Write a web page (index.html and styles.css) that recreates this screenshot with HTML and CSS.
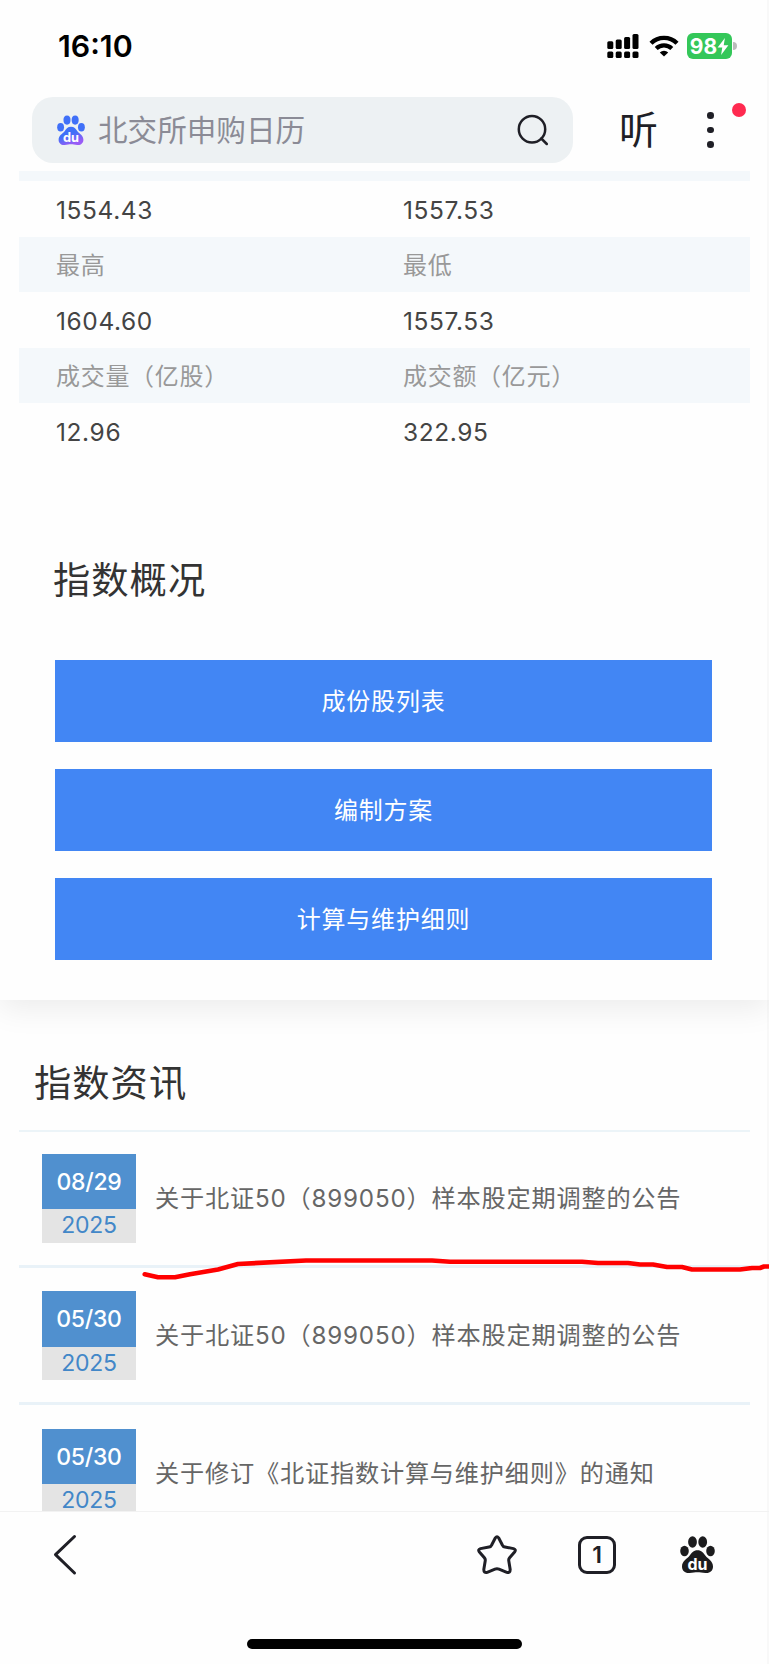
FILE: index.html
```html
<!DOCTYPE html>
<html lang="zh-CN">
<head>
  <meta charset="UTF-8" />
  <title>北证50</title>
  <link rel="stylesheet" href="styles.css">
</head>
<body>
  <!-- Status bar -->
  <div class="status">
    <span class="time">16:10</span>
    <div class="status-icons">
      <svg class="signal" width="33" height="26" viewBox="0 0 33 26">
        <rect x="0.3" y="8.2" width="6" height="7.8" rx="1.5"/>
        <rect x="8.7" y="6.6" width="6" height="9.4" rx="1.5"/>
        <rect x="17.1" y="4" width="6" height="12" rx="1.5"/>
        <rect x="25.5" y="1" width="6" height="15" rx="1.5"/>
        <rect x="0.3" y="18.5" width="6" height="6.5" rx="1.5"/>
        <rect x="8.7" y="18.5" width="6" height="6.5" rx="1.5"/>
        <rect x="17.1" y="18.5" width="6" height="6.5" rx="1.5"/>
        <rect x="25.5" y="18.5" width="6" height="6.5" rx="1.5"/>
      </svg>
      <svg class="wifi" width="30" height="24" viewBox="0 0 30 24">
        <path d="M2 9.2A18.5 18.5 0 0 1 28 9.2" fill="none" stroke="#000" stroke-width="4.4"/>
        <path d="M7.2 14.6A11.2 11.2 0 0 1 22.8 14.6" fill="none" stroke="#000" stroke-width="4.2"/>
        <path d="M15 22.6L10.8 18.4A6 6 0 0 1 19.2 18.4Z"/>
      </svg>
      <div class="battery">
        <span>98</span>
        <svg width="12" height="19" viewBox="0 0 11 18"><path d="M7.3 1L0.4 10H4.8L3.7 17L10.6 7.8H6.2Z" fill="#fff"/></svg>
      </div>
      <i class="nub"></i>
    </div>
  </div>

  <!-- Search -->
  <div class="topbar">
    <div class="search">
      <svg width="28" height="31" viewBox="0 0 35 38">
        <defs>
          <linearGradient id="paw" x1="0" y1="0" x2="0.5" y2="1">
            <stop offset="0.5" stop-color="#4070f8"/>
            <stop offset="1" stop-color="#9a5cf6"/>
          </linearGradient>
        </defs>
        <g fill="#4070f8">
          <ellipse cx="4.5" cy="15" rx="4.3" ry="5.3"/>
          <ellipse cx="12.5" cy="6" rx="4.4" ry="5.7"/>
          <ellipse cx="22.7" cy="6" rx="4.4" ry="5.7"/>
          <ellipse cx="30.5" cy="15" rx="4.3" ry="5.3"/>
        </g>
        <path fill="url(#paw)" d="M17.5 14.3C21.5 14.3 23.5 17 25.5 19.8C28 23 33 25 33 30.5C33 35 29.5 37.5 25.5 37C22 36.6 20 36.2 17.5 36.2C15 36.2 13 36.6 9.5 37C5.5 37.5 2 35 2 30.5C2 25 7 23 9.5 19.8C11.5 17 13.5 14.3 17.5 14.3Z"/>
        <text class="du" x="17.5" y="34">du</text>
      </svg>
      <span class="query">北交所申购日历</span>
      <svg width="32" height="32" viewBox="0 0 32 32" fill="none" stroke="#1f1f26" stroke-width="2.5" stroke-linecap="round">
        <circle cx="15" cy="15.3" r="13.2"/>
        <path d="M24.3 24.5L29.8 30"/>
      </svg>
    </div>
    <span class="listen">听</span>
    <div class="more">
      <i></i><i></i><i></i>
      <b class="badge"></b>
    </div>
  </div>

  <main class="page">
    <section class="overview">
      <div class="quote">
        <div class="row label cut"></div>
        <div class="row"><span>1554.43</span><span>1557.53</span></div>
        <div class="row label"><span>最高</span><span>最低</span></div>
        <div class="row"><span>1604.60</span><span>1557.53</span></div>
        <div class="row label"><span>成交量（亿股）</span><span>成交额（亿元）</span></div>
        <div class="row"><span>12.96</span><span>322.95</span></div>
      </div>
      <h2>指数概况</h2>
      <div class="links">
        <a class="btn">成份股列表</a>
        <a class="btn">编制方案</a>
        <a class="btn">计算与维护细则</a>
      </div>
    </section>

    <section class="news">
      <h2>指数资讯</h2>
      <div class="item">
        <div class="date"><b>08/29</b><span>2025</span></div>
        <p>关于北证50（899050）样本股定期调整的公告</p>
      </div>
      <div class="item">
        <div class="date"><b>05/30</b><span>2025</span></div>
        <p>关于北证50（899050）样本股定期调整的公告</p>
      </div>
      <div class="item">
        <div class="date"><b>05/30</b><span>2025</span></div>
        <p>关于修订《北证指数计算与维护细则》的通知</p>
      </div>
    </section>
  </main>

  <!-- Browser toolbar -->
  <footer>
    <nav class="tools">
      <svg class="back" width="24" height="42" viewBox="0 0 24 42" fill="none" stroke="#1f1f26" stroke-width="3" stroke-linecap="round" stroke-linejoin="round">
        <path d="M21.5 2.5L2.5 20.7L21.5 39"/>
      </svg>
      <svg width="40" height="40" viewBox="0 0 40 40" fill="none" stroke="#1f1f26" stroke-width="3" stroke-linejoin="round">
        <path d="M18.4 2.8Q20 0.6 21.6 2.8L25.2 9.8Q26 11.6 28 12L36.5 13.6Q39.5 14.6 37.6 17L32.6 22.8Q31.4 24.2 31.8 26L33.2 34.5Q33.2 38.2 29.8 37.4L22 34.2Q20 33.4 18 34.2L10.2 37.4Q6.8 38.2 6.8 34.5L8.2 26Q8.6 24.2 7.4 22.8L2.4 17Q0.5 14.6 3.5 13.6L12 12Q14 11.6 14.8 9.8Z"/>
      </svg>
      <span class="tabs">1</span>
      <svg width="35" height="38" viewBox="0 0 35 38" fill="#1c1c1e">
        <ellipse cx="4.5" cy="15" rx="4.3" ry="5.3"/>
        <ellipse cx="12.5" cy="6" rx="4.4" ry="5.7"/>
        <ellipse cx="22.7" cy="6" rx="4.4" ry="5.7"/>
        <ellipse cx="30.5" cy="15" rx="4.3" ry="5.3"/>
        <path d="M17.5 14.3C21.5 14.3 23.5 17 25.5 19.8C28 23 33 25 33 30.5C33 35 29.5 37.5 25.5 37C22 36.6 20 36.2 17.5 36.2C15 36.2 13 36.6 9.5 37C5.5 37.5 2 35 2 30.5C2 25 7 23 9.5 19.8C11.5 17 13.5 14.3 17.5 14.3Z"/>
        <text class="du" x="17.5" y="34">du</text>
      </svg>
    </nav>
    <div class="home"></div>
  </footer>

  <!-- Hand-drawn underline -->
  <svg class="mark" width="629" height="24" viewBox="141 1257 629 24">
    <path d="M144.7 1274.3L158 1277.3H175L190 1274.3L218 1269.5L238 1264L306 1260.5H432L450 1261.7H582L598 1263H628L640 1264.5H653L667 1267H682L692 1269.5H740L752 1268H760L764 1266.5H770"/>
  </svg>
</body>
</html>
```

FILE: styles.css
```css
*{margin:0;padding:0;box-sizing:border-box}
body{
  position:relative;
  display:flex;
  flex-direction:column;
  width:769px;
  height:1664px;
  overflow:hidden;
  background:linear-gradient(to right,#fefefe 767px,#f8f8f8 767px);
  font-family:Inter,'Noto Sans CJK SC',sans-serif;
  color:#333;
}
svg{display:block;flex:none}

.status{display:flex;justify-content:space-between;align-items:center;height:97px;padding:0 32px 5px 58px}
.time{font-size:30.3px;font-weight:600;color:#000}
.status-icons{display:flex;align-items:center}
.wifi{margin-left:9px}
.battery{display:flex;align-items:center;justify-content:center;width:45px;height:26px;margin-left:8px;border-radius:6px;background:#34c759;color:#fff;font-size:21px;font-weight:700}
.nub{width:4px;height:8px;margin-left:1px;border-radius:0 4px 4px 0;background:#bbb}

.topbar{display:flex;align-items:center;height:66px;padding-left:32px}
.search{display:flex;align-items:center;width:541px;height:66px;padding:0 24px 0 25px;border-radius:21px;background:#edf1f3}
.query{flex:1;margin-left:13px;font-size:29.6px;line-height:40px;color:#8b8b96}
.du{font:700 16px Inter,sans-serif;fill:#fff;text-anchor:middle}
.listen{margin-left:46px;font-size:39px;line-height:50px;color:#1f1f26}
.more{position:relative;display:flex;flex-direction:column;gap:8px;margin-left:49px}
.more i{width:6.6px;height:6.6px;border-radius:50%;background:#1f1f26}
.badge{position:absolute;left:24.5px;top:-9.5px;width:14px;height:14px;border-radius:50%;background:#ff2a50}

.page{height:1348px;padding-top:8px;overflow:hidden}
.overview{height:829px;box-shadow:0 8px 30px rgba(0,0,0,.08);clip-path:inset(0 0 -40px 0)}
.quote{margin:0 19px}
.row{display:grid;grid-template-columns:347px 1fr;align-items:center;height:55.6px;padding:2px 0 0 37px;font-size:24.5px;letter-spacing:.6px;color:#444}
.label{padding-top:0;padding-bottom:2px;background:#f4f8fb;font-size:24px;letter-spacing:.7px;color:#999}
.cut{height:10px}
h2{font-size:37.3px;font-weight:400;line-height:50px;letter-spacing:1px;color:#333}
.overview h2{margin:97px 0 0 53px}
.links{display:flex;flex-direction:column;gap:27.5px;margin:54px 57px 0 55px}
.btn{height:81.7px;line-height:84px;background:#4286f4;color:#fff;font-size:24px;letter-spacing:.8px;text-align:center}

.news{padding-top:59px}
.news h2{height:71px;padding-left:34px}
.item{display:flex;height:137.5px;margin:0 19px;padding:23.5px 0 0 23px;border-bottom:3px solid #e9f2f8}
.news h2 + .item{padding-top:21.5px;border-top:2px solid #ecf4f8}
.date{width:94px;height:89px;background:#e4e4e4;text-align:center;font-size:23px;letter-spacing:-.3px}
.date b{display:block;height:55.5px;line-height:56px;background:#5090cf;color:#fff;font-weight:500}
.date span{display:block;line-height:33px;color:#4287c8}
.item p{margin:27px 0 0 19px;font-size:24.2px;line-height:36px;letter-spacing:.8px;color:#666;white-space:nowrap}

footer{display:flex;flex-direction:column;align-items:center;justify-content:space-between;height:153px;padding-bottom:15px;border-top:1px solid #f2f2f2}
.tools{display:flex;align-items:center;width:100%;padding:22px 54px 0 53px}
.back{margin-right:auto}
.tabs{width:38px;height:38px;margin:0 64px 0 61px;border:3px solid #1f1f26;border-radius:9px;font-size:23px;font-weight:600;line-height:32px;text-align:center;color:#1f1f26}
.home{width:275px;height:10px;border-radius:5px;background:#000}

.mark{position:absolute;left:141px;top:1257px}
.mark path{fill:none;stroke:#f00;stroke-width:4.6;stroke-linecap:round;stroke-linejoin:round}
```
